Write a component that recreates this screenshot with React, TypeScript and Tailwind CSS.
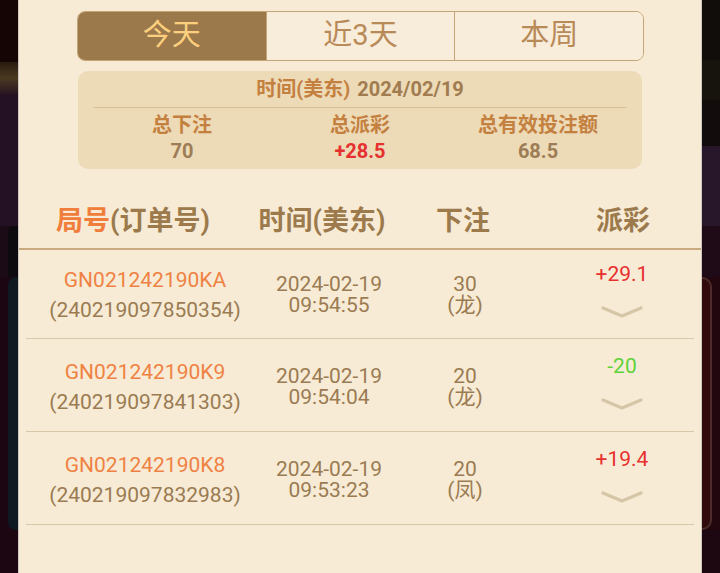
import React from "react";

type Row = {
  round: string;
  order: string;
  date: string;
  time: string;
  bet: string;
  side: string;
  payout: string;
  win: boolean;
};

const ROWS: Row[] = [
  { round: "GN021242190KA", order: "(240219097850354)", date: "2024-02-19", time: "09:54:55", bet: "30", side: "(龙)", payout: "+29.1", win: true },
  { round: "GN021242190K9", order: "(240219097841303)", date: "2024-02-19", time: "09:54:04", bet: "20", side: "(龙)", payout: "-20", win: false },
  { round: "GN021242190K8", order: "(240219097832983)", date: "2024-02-19", time: "09:53:23", bet: "20", side: "(凤)", payout: "+19.4", win: true },
];

const TABS = ["今天", "近3天", "本周"];

function Chevron() {
  return (
    <svg width="42" height="14" viewBox="0 0 42 14" className="blur-[0.4px]">
      <path d="M2 3 L21 11 L40 3" fill="none" stroke="#d6c6a8" strokeWidth="3.2" strokeLinecap="round" strokeLinejoin="round" />
    </svg>
  );
}

export default function App() {
  return (
    <div
      className="flex h-[573px] w-[720px] overflow-hidden bg-[#150807]"
      style={{ fontFamily: "Roboto, 'Noto Sans CJK SC', sans-serif" }}
    >
      {/* left backdrop */}
      <div className="flex w-[18px] flex-col">
        <div className="h-[62px] bg-[#150605]" />
        <div className="h-[32px] bg-gradient-to-b from-[#2a1a10] via-[#4a3a20] to-[#2a1520]" />
        <div className="h-[132px] bg-[#241224]" />
        <div className="flex h-[51px] bg-[#1a0b16]">
          <div className="w-[8px]" />
          <div className="flex-1 rounded-tl-[6px] bg-[#0c0a0e]" />
        </div>
        <div className="flex h-[253px] bg-[#1c0612]">
          <div className="w-[8px]" />
          <div className="flex-1 rounded-l-[8px] bg-[#0e1921]" />
        </div>
        <div className="flex-1 bg-[#1c0612]" />
      </div>

      {/* panel */}
      <div className="flex w-[684px] flex-col border-x border-x-[#cfc8c0] bg-[#f7ebd6]">
        {/* tabs */}
        <div className="ml-[58px] mt-[11px] flex h-[50px] w-[567px] overflow-hidden rounded-[8px] border-[1.5px] border-[#c5a478]">
          {TABS.map((t, i) => (
            <div
              key={t}
              className={
                i === 0
                  ? "flex flex-1 items-center justify-center bg-[#9b794b] text-[29px] text-[#fbcf7e]"
                  : "flex flex-1 items-center justify-center border-l-[1.5px] border-l-[#c5a478] bg-[#f8eddb] text-[29px] text-[#b88a58]"
              }
            >
              {t}
            </div>
          ))}
        </div>

        {/* summary */}
        <div className="ml-[59px] mt-[10px] flex h-[98px] w-[564px] flex-col rounded-[10px] bg-[#eddab7]">
          <div className="flex h-[36px] items-center justify-center gap-[7px] text-[20px] font-bold">
            <span className="text-[#c4803f]">时间(美东)</span>
            <span className="text-[#a07c50]">2024/02/19</span>
          </div>
          <div className="mx-[15px] h-px bg-[#d8bf96]" />
          <div className="mx-[15px] grid grid-cols-3 pt-[4px] text-center text-[20px] font-bold leading-[26px]">
            <span className="text-[#c4803f]">总下注</span>
            <span className="text-[#c4803f]">总派彩</span>
            <span className="text-[#c4803f]">总有效投注额</span>
            <span className="text-[#9d7d55]">70</span>
            <span className="text-[#e5312f]">+28.5</span>
            <span className="text-[#9d7d55]">68.5</span>
          </div>
        </div>

        {/* table header */}
        <div className="mt-[26px] grid h-[53px] grid-cols-[228px_150px_132px_1fr] items-center text-center text-[27px] font-bold text-[#9c7a4c]">
          <span>
            <span className="text-[#f07d3c]">局号</span>(订单号)
          </span>
          <span>时间(美东)</span>
          <span>下注</span>
          <span className="pl-[16px]">派彩</span>
        </div>
        <div className="h-[2px] bg-[#c9aa7f]" />

        {/* rows */}
        {ROWS.map((r, i) => (
          <div key={r.round} className="flex flex-col">
            <div
              className={
                (i === 0 ? "h-[88px] pt-[2px] " : "h-[92px] pt-[4px] ") +
                "grid grid-cols-[252px_116px_156px_1fr] items-center text-center text-[21px] text-[#9b7b52]"
              }
            >
              <div className="flex flex-col leading-[30px]">
                <span className="text-[#ef8243]">{r.round}</span>
                <span>{r.order}</span>
              </div>
              <div className="flex flex-col leading-[21px]">
                <span>{r.date}</span>
                <span>{r.time}</span>
              </div>
              <div className="flex flex-col leading-[21px]">
                <span>{r.bet}</span>
                <span>{r.side}</span>
              </div>
              <div className="mb-[10px] flex flex-col items-center">
                <span className={r.win ? "leading-[24px] text-[#e8302f]" : "leading-[24px] text-[#5fd23a]"}>
                  {r.payout}
                </span>
                <div className="mt-[19px]">
                  <Chevron />
                </div>
              </div>
            </div>
            <div className="mx-[7px] h-px bg-[#d8c8a9]" />
          </div>
        ))}
      </div>

      {/* right backdrop */}
      <div className="flex w-[18px] flex-col">
        <div className="h-[60px] bg-[#110d0a]" />
        <div className="h-[40px] bg-[#17140e]" />
        <div className="h-[46px] bg-[#120c0c]" />
        <div className="h-[80px] bg-[#28162a]" />
        <div className="h-[51px] bg-[#1f0a17]" />
        <div className="flex h-[253px] bg-[#22070f]">
          <div className="w-[10px] rounded-r-[10px] border-y-2 border-r-2 border-[#4e2c2c] bg-[#300a0c]" />
          <div className="flex-1" />
        </div>
        <div className="flex-1 bg-[#1d0710]" />
      </div>
    </div>
  );
}
